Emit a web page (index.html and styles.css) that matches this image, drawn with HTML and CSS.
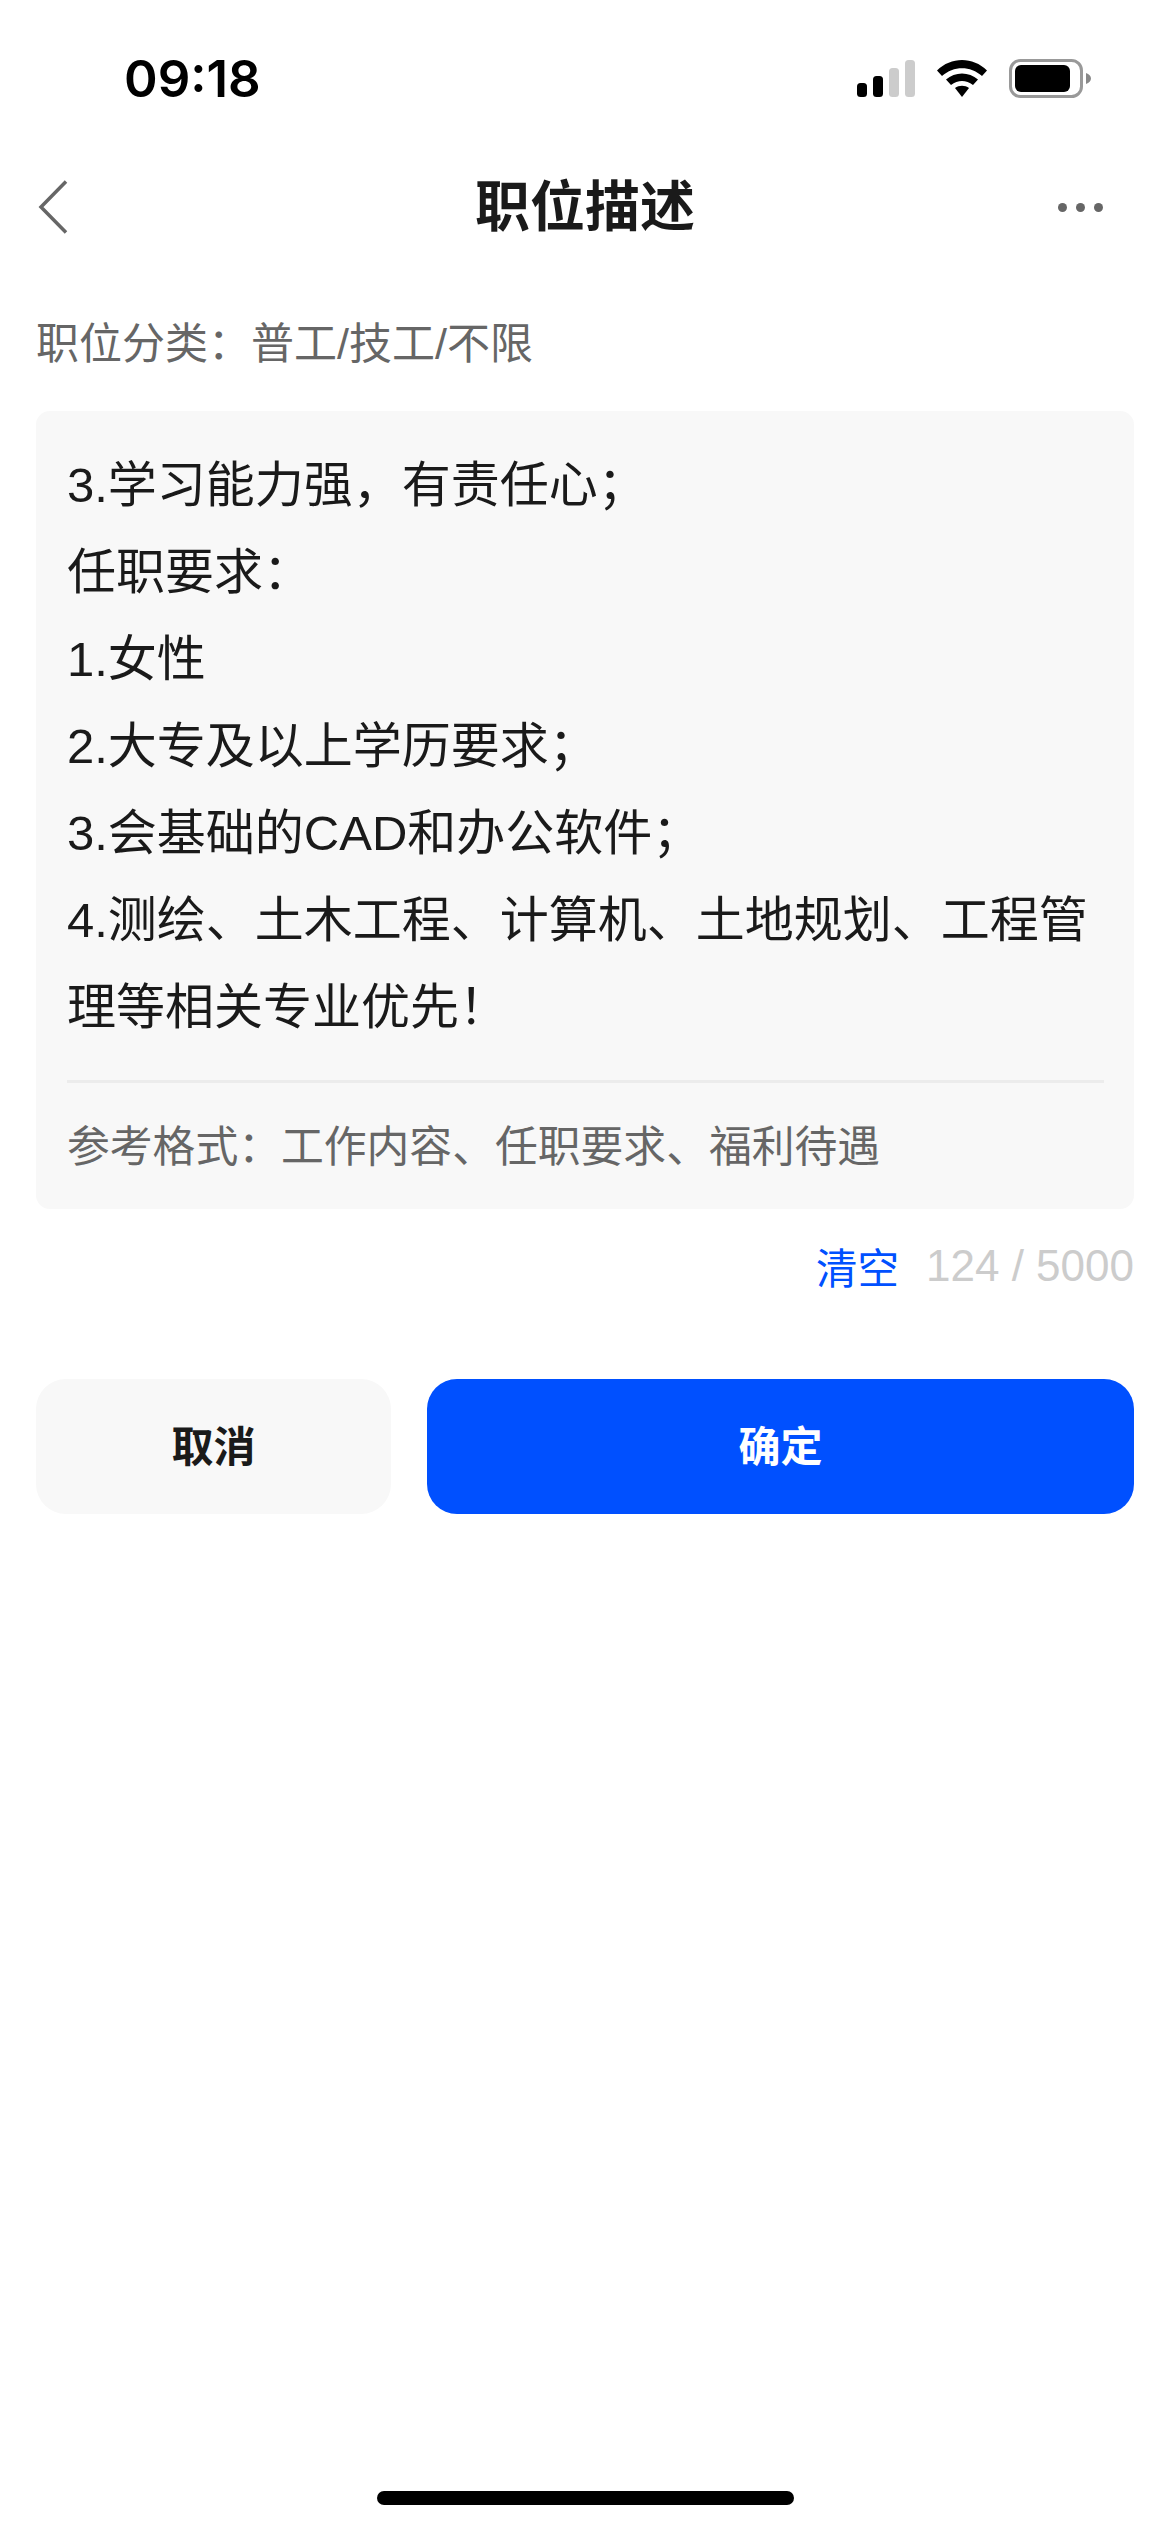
FILE: index.html
```html
<!DOCTYPE html>
<html lang="zh-CN">
<head>
  <meta charset="UTF-8" />
  <meta name="viewport" content="width=device-width, initial-scale=1.0">
  <title>职位描述</title>

  <link rel="stylesheet" href="styles.css">
</head>
<body>
  <div class="page">

    <!-- Status Bar -->
    <div class="status-bar">
      <span class="time">09:18</span>
      <div class="status-icons">
        <svg class="icon-signal" width="58" height="37" viewBox="0 0 58 37">
          <rect x="0" y="23" width="10" height="14" rx="3.500" fill="#000"/>
          <rect x="16" y="16" width="10" height="21" rx="3.500" fill="#000"/>
          <rect x="32" y="8" width="10" height="29" rx="3.500" fill="#ccc"/>
          <rect x="48" y="0" width="10" height="37" rx="3.500" fill="#ccc"/>
        </svg>
        <svg class="icon-wifi" width="50" height="37" viewBox="0 0 50 37">
          <path d="M0 10.500C14-3.500 36-3.500 50 10.500L45 16C33.500 5.500 16.500 5.500 5 16Z" fill="#000"/>
          <path d="M9 19.500C18 11.500 32 11.500 41 19.500L36 25C29 19.500 21 19.500 14 25Z" fill="#000"/>
          <path d="M18 28C22 25 28 25 32 28L25 37Z" fill="#000"/>
        </svg>
        <svg class="icon-battery" width="82" height="39" viewBox="0 0 82 39">
          <rect x="1.500" y="1.500" width="71" height="36" rx="10" fill="none" stroke="#999" stroke-width="3"/>
          <rect x="6" y="6" width="55" height="27" rx="6" fill="#000"/>
          <path d="M77 14C80 15 82 17 82 19.500C82 22 80 24 77 25Z" fill="#888"/>
        </svg>
      </div>
    </div>

    <!-- Nav Bar -->
    <div class="nav-bar">
      <svg class="icon-back" width="30" height="54" viewBox="0 0 30 54">
        <path d="M28 1.500L3 27L28 52.500" fill="none" stroke="#666" stroke-width="3.500"/>
      </svg>
      <h1 class="nav-title">职位描述</h1>
      <div class="nav-more">
        <span class="dot"></span>
        <span class="dot"></span>
        <span class="dot"></span>
      </div>
    </div>

    <p class="category">职位分类：普工/技工/不限</p>

    <!-- Description Card -->
    <div class="desc-card">
      <div class="desc-text">
        <p>3.学习能力强，有责任心；</p>
        <p>任职要求：</p>
        <p>1.女性</p>
        <p>2.大专及以上学历要求；</p>
        <p>3.会基础的CAD和办公软件；</p>
        <p>4.测绘、土木工程、计算机、土地规划、工程管理等相关专业优先！</p>
      </div>
      <p class="desc-hint">参考格式：工作内容、任职要求、福利待遇</p>
    </div>

    <div class="counter-row">
      <span class="clear-link">清空</span>
      <span class="counter">124 / 5000</span>
    </div>

    <div class="actions">
      <button class="btn btn-cancel">取消</button>
      <button class="btn btn-confirm">确定</button>
    </div>

    <div class="home-indicator"></div>
  </div>
</body>
</html>
```

FILE: styles.css
```css
:root {
  --primary: #0050ff;
  --text-primary: #1a1a1a;
  --text-secondary: #666666;
  --text-muted: #cccccc;
  --bg-field: #f8f8f8;
  --font-cjk: "Liberation Sans", "Noto Sans CJK SC", sans-serif;
}

* {
  box-sizing: border-box;
  margin: 0;
  padding: 0;
}

body {
  font-family: var(--font-cjk);
  background: #ffffff;
  color: var(--text-primary);
}

.page {
  display: flex;
  flex-direction: column;
  width: 1170px;
  height: 2532px;
  padding: 0 36px;
}

/* Status Bar */
.status-bar {
  display: flex;
  justify-content: space-between;
  align-items: center;
  height: 37px;
  margin-top: 60px;
  padding-left: 88px;
}

.time {
  font-family: Inter, sans-serif;
  font-size: 51px;
  font-weight: 600;
  line-height: 37px;
  color: #000000;
}

.status-icons {
  display: flex;
  align-items: center;
  gap: 22px;
  padding-right: 43px;
}

/* Nav Bar */
.nav-bar {
  display: flex;
  justify-content: space-between;
  align-items: center;
  height: 54px;
  margin-top: 83px;
  position: relative;
}

.nav-title {
  position: absolute;
  left: 0;
  right: 0;
  font-size: 55px;
  font-weight: 700;
  line-height: 54px;
  text-align: center;
}

.icon-back {
  margin-left: 2px;
}

.nav-more {
  display: flex;
  gap: 9px;
  margin-right: 31px;
}

.dot {
  width: 9px;
  height: 9px;
  border-radius: 50%;
  background: var(--text-secondary);
}

.category {
  margin-top: 80px;
  font-size: 43px;
  line-height: 60px;
  color: var(--text-secondary);
}

/* Description Card */
.desc-card {
  height: 798px;
  margin-top: 37px;
  padding: 31px 30px 0 31px;
  background: var(--bg-field);
  border-radius: 14px;
}

.desc-text {
  height: 641px;
  font-size: 49px;
  line-height: 87px;
  border-bottom: 3px solid #ececec;
  color: var(--text-primary);
}

.desc-hint {
  margin-top: 34px;
  font-size: 42.8px;
  line-height: 60px;
  color: var(--text-secondary);
}

.counter-row {
  display: flex;
  justify-content: flex-end;
  align-items: center;
  gap: 27px;
  height: 60px;
  margin-top: 27px;
}

.clear-link {
  font-size: 41.5px;
  color: var(--primary);
}

.counter {
  font-size: 44px;
  color: var(--text-muted);
}

.actions {
  display: flex;
  gap: 36px;
  margin-top: 83px;
}

.btn {
  height: 135px;
  padding-bottom: 6px;
  border: none;
  border-radius: 30px;
  font-family: var(--font-cjk);
  font-size: 42px;
  font-weight: 700;
}

.btn-cancel {
  width: 355px;
  background: var(--bg-field);
  color: var(--text-primary);
}

.btn-confirm {
  flex: 1;
  background: var(--primary);
  color: #ffffff;
}

.home-indicator {
  align-self: center;
  width: 417px;
  height: 14px;
  margin-top: auto;
  margin-bottom: 27px;
  border-radius: 7px;
  background: #000000;
}
```
